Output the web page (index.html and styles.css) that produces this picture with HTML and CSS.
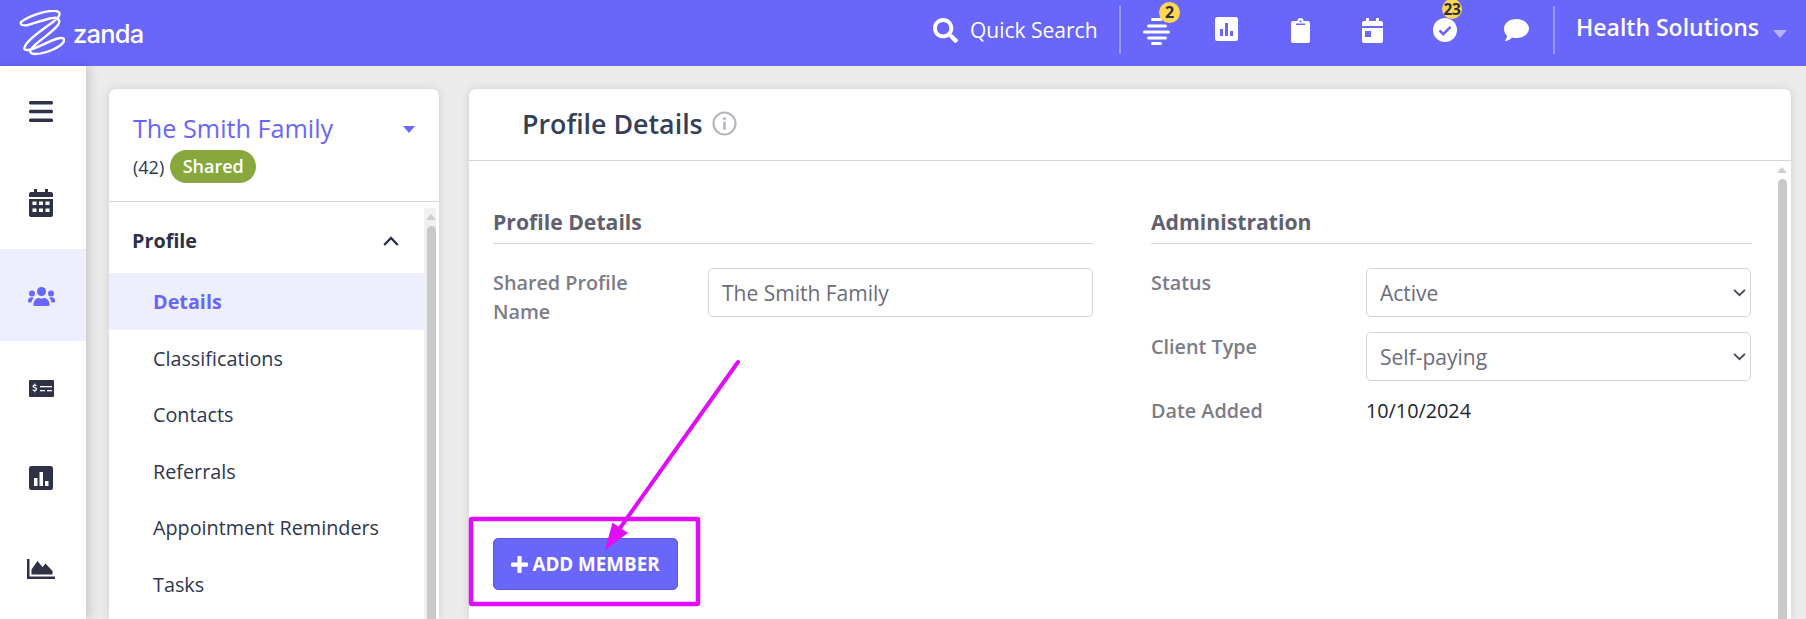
FILE: index.html
```html
<!DOCTYPE html>
<html lang="en">
<head>
<meta charset="utf-8">
<title>Profile Details</title>
<link rel="stylesheet" href="styles.css">
</head>
<body>
<header class="topbar">
  <div class="brand">
    <svg class="brand-mark" viewBox="0 0 46 46" width="46" height="46" fill="none" stroke="#fff" stroke-width="2.4" stroke-linecap="round" stroke-linejoin="round"><path d="M2 12C10 6 27 0 37 1c6 1 4 6-3 11C24 19 13 27 8 33c-3 4-4 7 0 7 7 0 20-8 29-11 6-2 9-1 8 2-2 6-19 13-29 13-5 0-6-3-3-6C19 31 34 22 39 15c3-5 0-8-5-7C26 9 13 14 9 15c-5 1-8 0-7-3z"/></svg>
    <span class="brand-name">zanda</span>
  </div>
  <div class="top-actions">
    <svg class="search-icon" viewBox="0 0 512 512" width="25" height="25"><path fill="#fff" d="M505 442.700 405.300 343c-4.500-4.500-10.600-7-17-7H372c27.600-35.300 44-79.700 44-128C416 93.100 322.900 0 208 0S0 93.100 0 208s93.100 208 208 208c48.300 0 92.700-16.400 128-44v16.300c0 6.400 2.500 12.500 7 17l99.700 99.700c9.400 9.400 24.600 9.400 33.900 0l28.300-28.300c9.400-9.400 9.400-24.600.1-34zM208 336c-70.700 0-128-57.200-128-128 0-70.700 57.200-128 128-128 70.700 0 128 57.200 128 128 0 70.700-57.200 128-128 128z"/></svg>
    <span class="search-text">Quick Search</span>
    <span class="top-divider"></span>
    <span class="tool tool-stack">
      <svg viewBox="0 0 27 27" width="27" height="27" fill="#fff"><rect x="8" y="0" width="11" height="3" rx="1.500"/><rect x="4" y="6.500" width="20" height="3" rx="1.500"/><rect x="0" y="12.500" width="27" height="3" rx="1.500"/><rect x="4" y="18.500" width="20" height="3" rx="1.500"/><rect x="8" y="24" width="11" height="3" rx="1.500"/></svg>
      <span class="count-badge badge-one">2</span>
    </span>
    <span class="tool tool-bars">
      <svg viewBox="0 0 23 24" width="23" height="24"><rect width="23" height="24" rx="2.500" fill="#fff"/><g fill="#6966fb"><rect x="5" y="12" width="3" height="7"/><rect x="10" y="6" width="3" height="13"/><rect x="15" y="14" width="3" height="5"/></g></svg>
    </span>
    <span class="tool tool-clip">
      <svg viewBox="0 0 19 25" width="19" height="25"><path fill="#fff" d="M2 3h4.500a3 3 0 0 1 6 0H17a2 2 0 0 1 2 2v18a2 2 0 0 1-2 2H2a2 2 0 0 1-2-2V5a2 2 0 0 1 2-2z"/><rect x="5" y="5.500" width="9" height="1.500" fill="#6966fb"/><circle cx="9.500" cy="3.200" r="1" fill="#6966fb"/></svg>
    </span>
    <span class="tool tool-cal">
      <svg viewBox="0 0 21 25" width="21" height="25"><path fill="#fff" d="M4 0h3v3h7V0h3v3h2a2 2 0 0 1 2 2v3H0V5a2 2 0 0 1 2-2h2zM0 10h21v13a2 2 0 0 1-2 2H2a2 2 0 0 1-2-2z"/><rect x="3" y="13" width="6" height="6" fill="#6966fb"/></svg>
    </span>
    <span class="tool tool-check">
      <svg viewBox="0 0 24 24" width="24" height="24"><circle cx="12" cy="12" r="12" fill="#fff"/><path d="M6.500 12.500l3.800 3.700 7.200-7.400" fill="none" stroke="#6966fb" stroke-width="2.600"/></svg>
      <span class="count-badge badge-two">23</span>
    </span>
    <span class="tool tool-chat">
      <svg viewBox="0 0 25 22" width="25" height="22"><path fill="#fff" d="M12.500 0C19.400 0 25 4.200 25 9.500S19.400 19 12.500 19c-1.500 0-3-.2-4.300-.6C6.600 20 3.800 22 .6 22c.5-.5 2.100-2.300 2.600-5C1.200 15.200 0 12.500 0 9.500 0 4.200 5.600 0 12.500 0z"/></svg>
    </span>
    <span class="top-divider divider-end"></span>
    <span class="org-name">Health Solutions</span>
    <span class="org-caret"></span>
  </div>
</header>

<div class="workspace">
  <nav class="rail">
    <a class="rail-item rail-first">
      <svg viewBox="0 0 24 21" width="24" height="21" fill="#2f3146"><rect width="24" height="3.500" rx="1.500"/><rect y="8.700" width="24" height="3.500" rx="1.500"/><rect y="17.500" width="24" height="3.500" rx="1.500"/></svg>
    </a>
    <a class="rail-item">
      <svg viewBox="0 0 24 28" width="24" height="28"><path fill="#2f3146" d="M5 0h3v3h8V0h3v3h3a2 2 0 0 1 2 2v3H0V5a2 2 0 0 1 2-2h3zM0 10h24v16a2 2 0 0 1-2 2H2a2 2 0 0 1-2-2z"/><g fill="#fff"><rect x="3.500" y="12.500" width="4" height="3.500"/><rect x="10" y="12.500" width="4" height="3.500"/><rect x="16.500" y="12.500" width="4" height="3.500"/><rect x="3.500" y="19.500" width="4" height="3.500"/><rect x="10" y="19.500" width="4" height="3.500"/><rect x="16.500" y="19.500" width="4" height="3.500"/></g></svg>
    </a>
    <a class="rail-item rail-active">
      <svg viewBox="0 0 27 19" width="27" height="19" fill="#6966fb"><circle cx="13.500" cy="4.500" r="4.500"/><circle cx="4" cy="6.500" r="3"/><circle cx="23" cy="6.500" r="3"/><path d="M7 19c-1 0-1.500-.5-1.500-1.500 0-4 3-6.500 5-6.500 1 0 1.500.7 3 .7s2-.7 3-.7c2 0 5 2.500 5 6.500 0 1-.5 1.500-1.500 1.500zM0 14c0-2.500 1.500-3.700 3.500-3.700 1 0 1.800.3 2.500.8-1.500 1-2.300 2.700-2.600 4.400H1.200C.5 15.500 0 15 0 14zM27 14c0-2.500-1.500-3.700-3.500-3.700-1 0-1.800.3-2.500.8 1.500 1 2.300 2.700 2.600 4.400h2.200c.7 0 1.200-.5 1.200-1.500z"/></svg>
    </a>
    <a class="rail-item rail-money">
      <svg viewBox="0 0 25 17" width="25" height="17"><rect width="25" height="17" rx="1" fill="#2f3146"/><g fill="#fff"><rect x="11" y="6" width="12" height="1.300"/><rect x="11" y="10" width="5" height="1.300"/><rect x="18" y="10" width="5" height="1.300"/><path d="M5.300 3.500h1v1.200c.7.100 1.200.4 1.600.8l-.7.7c-.4-.3-.8-.5-1.400-.5-.6 0-1 .2-1 .6 0 1 3.300.5 3.300 2.800 0 1-.7 1.700-1.800 1.900v1.200h-1V11c-.9-.1-1.500-.5-2-1l.7-.8c.5.4 1 .7 1.700.7s1.200-.3 1.200-.8c0-1.100-3.300-.6-3.300-2.800 0-1 .7-1.600 1.700-1.800z"/></g></svg>
    </a>
    <a class="rail-item rail-bars">
      <svg viewBox="0 0 24 24" width="24" height="24"><rect width="24" height="24" rx="2.500" fill="#2f3146"/><g fill="#fff"><rect x="5" y="12" width="3.500" height="8"/><rect x="10.500" y="6" width="3.500" height="14"/><rect x="16" y="15" width="3.500" height="5"/></g></svg>
    </a>
    <a class="rail-item">
      <svg viewBox="0 0 28 20" width="28" height="20" fill="#2f3146"><path d="M0 0h2.500v17.500H28V20H0z"/><path d="M4.500 15.500v-5L10.500 2l5 6 3-3.500 7 7.500v3.500z"/></svg>
    </a>
  </nav>

  <main class="content">
    <section class="side-card">
      <div class="side-head">
        <div class="side-title-row">
          <h2 class="side-title">The Smith Family</h2>
          <span class="side-caret"></span>
        </div>
        <div class="side-meta">
          <span class="side-count">(42)</span>
          <span class="shared-pill">Shared</span>
        </div>
      </div>
      <div class="side-body">
        <ul class="side-nav">
          <li class="nav-group">
            <span>Profile</span>
            <svg viewBox="0 0 16 10" width="16" height="10" fill="none" stroke="#2b3247" stroke-width="2.400"><path d="M1.200 9L8 2l6.800 7"/></svg>
          </li>
          <li class="nav-item nav-current">Details</li>
          <li class="nav-item">Classifications</li>
          <li class="nav-item">Contacts</li>
          <li class="nav-item">Referrals</li>
          <li class="nav-item">Appointment Reminders</li>
          <li class="nav-item">Tasks</li>
        </ul>
        <div class="scroll-track">
          <span class="scroll-up"></span>
          <span class="scroll-thumb"></span>
        </div>
      </div>
    </section>

    <section class="main-card">
      <div class="main-head">
        <h1 class="main-title">Profile Details</h1>
        <svg class="info-icon" viewBox="0 0 25 25" width="25" height="25"><circle cx="12.500" cy="12.500" r="11" fill="none" stroke="#b5b6c0" stroke-width="2.200"/><circle cx="12.500" cy="7.500" r="1.600" fill="#b5b6c0"/><rect x="11.200" y="10.500" width="2.600" height="8.500" rx="1" fill="#b5b6c0"/></svg>
      </div>
      <div class="main-body">
        <div class="main-scroll">
          <div class="form-cols">
            <div class="form-col">
              <h3 class="form-heading">Profile Details</h3>
              <div class="field">
                <label class="field-label">Shared Profile Name</label>
                <input class="control" type="text" value="The Smith Family">
              </div>
            </div>
            <div class="form-col">
              <h3 class="form-heading">Administration</h3>
              <div class="field field-tight">
                <label class="field-label">Status</label>
                <div class="select-wrap">
                  <select class="control"><option>Active</option></select>
                  <svg class="select-arrow" viewBox="0 0 12 8" width="13" height="9" fill="none" stroke="#4a4b58" stroke-width="1.700"><path d="M1 1.500l5 5 5-5"/></svg>
                </div>
              </div>
              <div class="field field-tight">
                <label class="field-label">Client Type</label>
                <div class="select-wrap">
                  <select class="control"><option>Self-paying</option></select>
                  <svg class="select-arrow" viewBox="0 0 12 8" width="13" height="9" fill="none" stroke="#4a4b58" stroke-width="1.700"><path d="M1 1.500l5 5 5-5"/></svg>
                </div>
              </div>
              <div class="field field-static">
                <span class="field-label">Date Added</span>
                <span class="field-value">10/10/2024</span>
              </div>
            </div>
          </div>
          <button class="add-member" type="button"><svg viewBox="0 0 16 16" width="17" height="17" fill="#fff"><rect x="6" width="4" height="16" rx="1"/><rect y="6" width="16" height="4" rx="1"/></svg>ADD MEMBER</button>
        </div>
        <div class="scroll-track track-main">
          <span class="scroll-up"></span>
          <span class="scroll-thumb"></span>
        </div>
      </div>
    </section>
  </main>
</div>

<svg class="annotation" viewBox="0 0 1806 619" width="1806" height="619">
  <rect x="471" y="519" width="227" height="85" rx="1" fill="none" stroke="#e00df8" stroke-width="4.500"/>
  <path d="M738 362L620 528" fill="none" stroke="#e00df8" stroke-width="4" stroke-linecap="round"/>
  <path d="M605 550L612.500 522.500L628 533z" fill="#e00df8"/>
</svg>
</body>
</html>
```

FILE: styles.css
```css
* { box-sizing: border-box; }
html, body { margin: 0; height: 619px; overflow: hidden; }
body {
  position: relative;
  background: #ebebeb;
  font-family: "Open Sans", "Liberation Sans", sans-serif;
  color: #2e3650;
}
h1, h2, h3, ul { margin: 0; padding: 0; }
ul { list-style: none; }

.topbar {
  height: 66px;
  background: #6966fb;
  color: #fff;
  display: flex;
  align-items: center;
  padding-left: 19px;
}
.brand { display: flex; align-items: center; }
.brand-mark { display: block; margin-top: 0; }
.brand-name {
  font-family: Inter, "Open Sans", sans-serif;
  font-size: 25.500px;
  font-weight: 500;
  letter-spacing: -0.8px;
  margin-left: 8px;
  margin-top: 1px;
}
.top-actions {
  margin-left: auto;
  width: 873px;
  height: 66px;
  display: flex;
  align-items: center;
}
.search-icon { flex: none; margin-top: -6px; }
.search-text { font-size: 21px; margin-left: 12px; width: 149px; margin-top: -6px; white-space: nowrap; }
.top-divider { width: 2px; height: 48px; background: rgba(255,255,255,.32); flex: none; margin-top: -6px; }
.tool { position: relative; display: block; flex: none; height: 27px; margin-top: -4px; }
.tool svg { display: block; }
.tool-stack { margin-left: 22px; margin-top: -4px; }
.tool-bars { margin-left: 45px; margin-top: -6px; }
.tool-clip { margin-left: 53px; margin-top: -4px; }
.tool-cal { margin-left: 52px; margin-top: -4px; }
.tool-check { margin-left: 50px; margin-top: -3px; }
.tool-chat { margin-left: 47px; margin-top: -2px; }
.divider-end { margin-left: 24px; }
.count-badge {
  position: absolute;
  background: #ffd84f;
  color: #2b2f45;
  border-radius: 50%;
  width: 21px;
  height: 21px;
  text-align: center;
  font-weight: 700;
  font-size: 16px;
  line-height: 21px;
}
.badge-one { left: 16px; top: -16px; }
.badge-two { left: 9px; top: -19px; width: 20px; height: 20px; font-size: 15.500px; line-height: 20px; letter-spacing: -.3px; }
.org-name { font-size: 23px; font-weight: 600; margin-left: 21px; margin-top: -12px; white-space: nowrap; }
.org-caret {
  margin-left: 14px;
  margin-top: 2px;
  border-left: 7px solid transparent;
  border-right: 7px solid transparent;
  border-top: 8px solid rgba(255,255,255,.5);
}

.workspace { display: flex; height: 553px; }
.rail {
  width: 86px;
  flex: none;
  background: #fff;
  box-shadow: 3px 0 10px rgba(0,0,0,.16);
  position: relative;
  z-index: 1;
}
.rail-item { height: 91.600px; display: flex; align-items: center; justify-content: center; }
.rail-item svg { display: block; margin-left: -4px; }
.rail-first { height: 91px; }
.rail-active { background: #edeefe; height: 92.400px; padding-top: 4px; }
.rail-money { padding-top: 4px; }
.rail-bars { height: 90.800px; }

.content {
  flex: 1;
  min-width: 0;
  display: flex;
  gap: 30px;
  padding: 23px 15px 0 23px;
}
.side-card, .main-card {
  background: #fff;
  border-radius: 7px 7px 0 0;
  box-shadow: 0 0 10px rgba(0,0,0,.12);
  height: 530px;
}
.side-card { width: 330px; flex: none; overflow: hidden; }
.side-head { padding: 24px 24px 18px; border-bottom: 1px solid #d6d6d9; height: 113px; }
.side-title-row { display: flex; align-items: center; justify-content: space-between; height: 30px; }
.side-title { font-size: 25.200px; font-weight: 500; color: #6966fb; line-height: 30px; }
.side-caret {
  margin-right: 0;
  border-left: 6px solid transparent;
  border-right: 6px solid transparent;
  border-top: 7px solid #6966fb;
  margin-top: 2px;
}
.side-meta { display: flex; align-items: center; margin-top: 7px; gap: 6px; }
.side-count { font-size: 18px; }
.shared-pill {
  height: 33px;
  width: 86px;
  background: #88a83d;
  color: #fff;
  font-weight: 600;
  font-size: 18px;
  border-radius: 17px;
  text-align: center;
  line-height: 32px;
}
.side-body { display: flex; margin-top: 6px; }
.side-nav { width: 315px; flex: none; }
.nav-group {
  height: 65px;
  display: flex;
  align-items: center;
  justify-content: space-between;
  padding: 0 25px 0 23px;
  font-size: 19.800px;
  font-weight: 700;
  color: #2b3247;
}
.nav-item {
  height: 56.600px;
  line-height: 57px;
  padding-left: 44px;
  font-size: 19.800px;
  color: #2e3650;
}
.nav-current { background: #edeefe; color: #6966fb; font-weight: 700; }

.scroll-track { width: 12px; flex: none; background: #f1f1f1; position: relative; height: 420px; }
.scroll-up {
  position: absolute;
  left: 2px;
  top: 6px;
  border-left: 5px solid transparent;
  border-right: 5px solid transparent;
  border-bottom: 6px solid #cfcfcf;
}
.scroll-thumb {
  position: absolute;
  left: 3px;
  right: 0;
  top: 18px;
  bottom: 0;
  background: #c9c9c9;
  border-radius: 5px 5px 0 0;
}

.main-card { flex: 1; min-width: 0; overflow: hidden; }
.main-head {
  height: 72px;
  border-bottom: 1px solid #d6d6d9;
  display: flex;
  align-items: center;
  padding-left: 53px;
  padding-bottom: 2px;
}
.main-title { font-size: 26.800px; font-weight: 600; color: #34405a; }
.info-icon { margin-left: 9px; }
.main-body { display: flex; }
.main-scroll { flex: 1; min-width: 0; padding: 47px 0 0 24px; }
.track-main { width: 13px; margin-right: 3px; background: #fff; height: 460px; }
.track-main .scroll-thumb { left: 3px; right: 1px; top: 18px; }
.form-cols { display: flex; gap: 58px; height: 330px; }
.form-col { width: 601px; flex: none; }
.form-col:first-child { width: 600px; }
.form-heading {
  font-size: 21.200px;
  font-weight: 700;
  color: #5f6070;
  line-height: 28px;
  padding-bottom: 7px;
  border-bottom: 1px solid #d6d6d9;
  margin-bottom: 24px;
}
.field { display: grid; grid-template-columns: 215px 1fr; }
.field-tight { margin-bottom: 15px; }
.field-label {
  font-size: 19.800px;
  font-weight: 600;
  color: #7b7c88;
  line-height: 29px;
  padding-right: 40px;
}
.field-static { align-items: center; margin-top: 2px; }
.field-value { font-size: 19.800px; color: #23242c; }
.control {
  width: 100%;
  height: 49px;
  border: 1px solid #d3d3da;
  border-radius: 5px;
  background: #fff;
  color: #6b6c7b;
  font-family: "Open Sans", sans-serif;
  font-size: 21px;
  padding: 0 13px;
  appearance: none;
  outline: none;
}
.select-wrap { position: relative; margin-right: 1px; }
.select-arrow { position: absolute; right: 5px; top: 20px; }
.add-member {
  margin-top: 0;
  display: flex;
  align-items: center;
  justify-content: center;
  gap: 4px;
  width: 185px;
  height: 52px;
  background: #6966fb;
  border: 1px solid #5a57dd;
  border-radius: 5px;
  color: #fff;
  font-family: "Open Sans", sans-serif;
  font-size: 18.800px;
  font-weight: 700;
  padding: 0;
}
.annotation { position: absolute; left: 0; top: 0; pointer-events: none; z-index: 5; }
```
